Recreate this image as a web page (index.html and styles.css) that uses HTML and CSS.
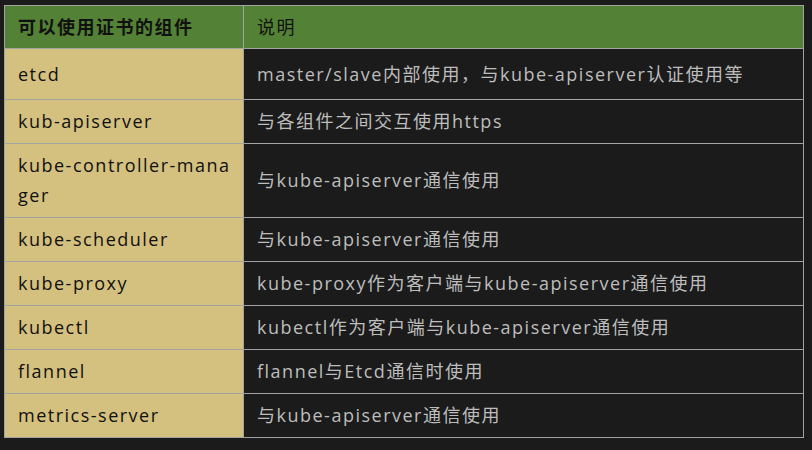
FILE: index.html
```html
<!DOCTYPE html>
<html lang="zh-CN">
<head>
<meta charset="utf-8">
<title>证书组件</title>
<link rel="stylesheet" href="styles.css">
</head>
<body>
<table class="cert-table">
  <thead>
    <tr>
      <th class="col-name">可以使用证书的组件</th>
      <th class="col-desc">说明</th>
    </tr>
  </thead>
  <tbody>
    <tr class="row-tall"><td class="col-name">etcd</td><td class="col-desc">master/slave内部使用，与kube-apiserver认证使用等</td></tr>
    <tr><td class="col-name">kub-apiserver</td><td class="col-desc">与各组件之间交互使用https</td></tr>
    <tr><td class="col-name">kube-controller-manager</td><td class="col-desc">与kube-apiserver通信使用</td></tr>
    <tr><td class="col-name">kube-scheduler</td><td class="col-desc">与kube-apiserver通信使用</td></tr>
    <tr><td class="col-name">kube-proxy</td><td class="col-desc">kube-proxy作为客户端与kube-apiserver通信使用</td></tr>
    <tr><td class="col-name">kubectl</td><td class="col-desc">kubectl作为客户端与kube-apiserver通信使用</td></tr>
    <tr><td class="col-name">flannel</td><td class="col-desc">flannel与Etcd通信时使用</td></tr>
    <tr><td class="col-name">metrics-server</td><td class="col-desc">与kube-apiserver通信使用</td></tr>
  </tbody>
</table>
</body>
</html>
```

FILE: styles.css
```css
html, body {
  margin: 0;
  background: #1b1b1b;
}
body {
  padding: 5px 0 0 4px;
  font-family: "Open Sans", "Noto Sans CJK SC", sans-serif;
  font-size: 18px;
}
.cert-table {
  border-collapse: collapse;
  width: 800px;
  table-layout: fixed;
}
.cert-table th,
.cert-table td {
  border: 1px solid #a3a3a3;
  padding: 6px 8px 7px 13px;
  line-height: 30px;
  text-align: left;
  vertical-align: middle;
  letter-spacing: 1.5px;
}
.cert-table th {
  padding-bottom: 6px;
}
.cert-table .col-name {
  width: 217px;
}
.cert-table th {
  background: #538135;
  color: #111;
}
.cert-table th.col-name {
  font-weight: bold;
}
.cert-table th.col-desc {
  font-weight: normal;
}
.cert-table td.col-name {
  background: #d4c07f;
  color: #111;
  word-break: break-all;
}
.cert-table td.col-desc {
  background: #1b1b1b;
  color: #bdbdbd;
}
.cert-table .row-tall td {
  padding-top: 10px;
  padding-bottom: 10px;
}
```
